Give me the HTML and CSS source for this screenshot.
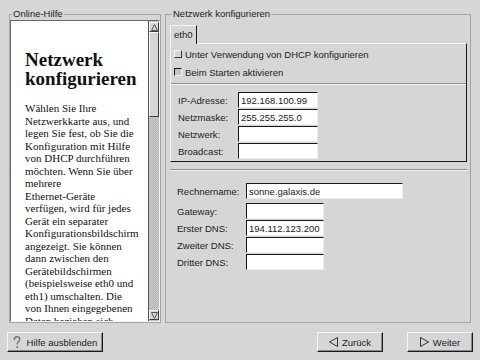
FILE: index.html
```html
<!DOCTYPE html>
<html lang="de">
<head>
<meta charset="UTF-8">
<meta name="viewport" content="width=device-width, initial-scale=1.0">
<title>Netzwerk konfigurieren</title>
<link rel="stylesheet" href="styles.css">
</head>
<body>
<div class="main">
  <fieldset class="frame help-frame">
    <legend>Online-Hilfe</legend>
    <div class="scrolled">
      <div class="help-text">
        <h1>Netzwerk<br>konfigurieren</h1>
        <p>Wählen Sie Ihre<br>
        Netzwerkkarte aus, und<br>
        legen Sie fest, ob Sie die<br>
        Konfiguration mit Hilfe<br>
        von DHCP durchführen<br>
        möchten. Wenn Sie über<br>
        mehrere<br>
        Ethernet-Geräte<br>
        verfügen, wird für jedes<br>
        Gerät ein separater<br>
        Konfigurationsbildschirm<br>
        angezeigt. Sie können<br>
        dann zwischen den<br>
        Gerätebildschirmen<br>
        (beispielsweise eth0 und<br>
        eth1) umschalten. Die<br>
        von Ihnen eingegebenen<br>
        Daten beziehen sich</p>
      </div>
      <div class="scrollbar">
        <div class="sb-btn">
          <svg width="7" height="7" viewBox="0 0 7 7"><polygon points="3.5,0.5 6.5,6.5 0.5,6.5" fill="none" stroke="#555"/></svg>
        </div>
        <div class="sb-thumb"></div>
        <div class="sb-trough"></div>
        <div class="sb-btn">
          <svg width="7" height="7" viewBox="0 0 7 7"><polygon points="0.5,0.5 6.5,0.5 3.5,6.5" fill="none" stroke="#555"/></svg>
        </div>
      </div>
    </div>
  </fieldset>

  <fieldset class="frame net-frame">
    <legend>Netzwerk konfigurieren</legend>
    <div class="tabs"><span class="tab">eth0</span></div>
    <div class="tab-page">
      <label class="check"><span class="box"></span>Unter Verwendung von DHCP konfigurieren</label>
      <label class="check"><span class="box on"></span>Beim Starten aktivieren</label>
      <div class="sep"></div>
      <div class="form-grid ip-grid">
        <span>IP-Adresse:</span><input type="text" value="192.168.100.99">
        <span>Netzmaske:</span><input type="text" value="255.255.255.0">
        <span>Netzwerk:</span><input type="text" value="">
        <span>Broadcast:</span><input type="text" value="">
      </div>
    </div>
    <div class="sep outer-sep"></div>
    <div class="form-grid host-row">
      <span>Rechnername:</span><input type="text" class="wide" value="sonne.galaxis.de">
    </div>
    <div class="form-grid dns-grid">
      <span>Gateway:</span><input type="text" value="">
      <span>Erster DNS:</span><input type="text" value="194.112.123.200">
      <span>Zweiter DNS:</span><input type="text" value="">
      <span>Dritter DNS:</span><input type="text" value="">
    </div>
  </fieldset>
</div>

<div class="buttons">
  <button class="btn help-btn">
    <svg width="8" height="13" viewBox="0 0 8 13"><path d="M1.3 4 C1.3 1.8 2.6 0.8 4 0.8 C5.6 0.8 6.7 2 6.7 3.5 C6.7 5.4 4.2 5.8 4.2 8.4" fill="none" stroke="#777" stroke-width="1.4"/><circle cx="4.2" cy="11" r="1" fill="#777"/></svg>
    Hilfe ausblenden
  </button>
  <button class="btn nav-btn back">
    <svg width="9" height="10" viewBox="0 0 9 10"><polygon points="8.5,0.5 8.5,9.5 0.5,5" fill="none" stroke="#333"/></svg>
    Zurück
  </button>
  <button class="btn nav-btn">
    <svg width="9" height="10" viewBox="0 0 9 10"><polygon points="0.5,0.5 0.5,9.5 8.5,5" fill="none" stroke="#333"/></svg>
    Weiter
  </button>
</div>
</body>
</html>
```

FILE: styles.css
```css
* {
  box-sizing: border-box;
}
body {
  margin: 0;
  width: 480px;
  height: 360px;
  overflow: hidden;
  background-color: #d6d6d6;
  font-family: 'Liberation Sans', Arial, sans-serif;
  font-size: 9.5px;
  color: #1c1c1c;
}
.main {
  display: flex;
  gap: 4px;
  height: 323px;
  padding: 9px 0 0 9px;
}
.frame {
  display: flex;
  flex-direction: column;
  margin: 0;
  padding: 0;
  min-width: 0;
  min-height: 0;
  border: 1px solid #a4a4a4;
}
.frame legend {
  margin-left: 2px;
  padding: 0 1px;
  line-height: 10px;
}
.help-frame {
  width: 152px;
  padding-top: 1px;
}
.net-frame {
  width: 306px;
  padding: 6px 3px 0 4px;
}

/* help pane */
.scrolled {
  flex: 1;
  min-height: 0;
  overflow: hidden;
  display: flex;
  border: 1px solid;
  border-color: #6a6a6a #f4f4f4 #f4f4f4 #6a6a6a;
}
.help-text {
  flex: 1;
  background-color: #fff;
  overflow: hidden;
  padding-left: 14px;
  font-family: 'Liberation Serif', 'Times New Roman', serif;
  color: #111;
}
.help-text h1 {
  margin: 29px 0 0;
  font-size: 19px;
  line-height: 19px;
}
.help-text p {
  margin: 14px 0 0;
  font-size: 11px;
  line-height: 12.5px;
  white-space: nowrap;
}
.scrollbar {
  width: 11px;
  display: flex;
  flex-direction: column;
  padding: 1px 0;
  border-left: 1px solid #555;
  background: repeating-conic-gradient(#b2b2b2 0 25%, #cfcfcf 0 50%) 0 0 / 2px 2px;
}
.sb-btn, .sb-thumb {
  border: 1px solid;
  border-color: #f4f4f4 #3c3c3c #3c3c3c #f4f4f4;
  background-color: #d6d6d6;
}
.sb-btn {
  height: 10px;
  display: flex;
  align-items: center;
  justify-content: center;
}
.sb-thumb {
  height: 85px;
}
.sb-trough {
  flex: 1;
}

/* notebook */
.tabs {
  height: 18px;
}
.tab {
  position: relative;
  display: inline-block;
  width: 27px;
  height: 19px;
  padding-left: 3px;
  line-height: 17px;
  background-color: #d6d6d6;
  border: 1px solid;
  border-bottom: none;
  border-color: #f4f4f4 #1a1a1a #f4f4f4 #f4f4f4;
}
.tab-page {
  height: 119px;
  padding: 1px 0 2px;
  border: 1px solid;
  border-color: #f4f4f4 #1a1a1a #1a1a1a #f4f4f4;
}
.check {
  display: flex;
  align-items: center;
  gap: 3px;
  height: 18px;
  padding-left: 3px;
}
.box {
  width: 8px;
  height: 8px;
  border: 1px solid;
  border-color: #f4f4f4 #3a3a3a #3a3a3a #f4f4f4;
  background-color: #d6d6d6;
}
.box.on {
  border-color: #1a1a1a #f4f4f4 #f4f4f4 #1a1a1a;
  background-color: #c4c4c4;
}
.sep {
  height: 2px;
  margin-top: 2px;
  border-top: 1px solid #8e8e8e;
  border-bottom: 1px solid #f4f4f4;
}
.outer-sep {
  margin-top: 7px;
}

/* label / entry grids */
.form-grid {
  display: grid;
  align-items: center;
  grid-auto-rows: 16px;
  row-gap: 1px;
}
.form-grid input {
  width: 80px;
  height: 16px;
  margin: 0;
  padding: 0 2px;
  font-family: 'Liberation Sans', Arial, sans-serif;
  font-size: 9.5px;
  color: #222;
  background-color: #fff;
  border: 1px solid;
  border-color: #1a1a1a #ececec #ececec #1a1a1a;
  outline: none;
}
.ip-grid {
  margin-top: 7px;
  padding-left: 7px;
  grid-template-columns: 60px 80px;
}
.host-row, .dns-grid {
  padding-left: 7px;
  grid-template-columns: 69px auto;
}
.host-row {
  margin-top: 12px;
}
.dns-grid {
  margin-top: 4px;
}
.dns-grid input {
  width: 78px;
}
.form-grid input.wide {
  width: 157px;
}

/* bottom buttons */
.buttons {
  display: flex;
  padding: 9px 7px 0;
}
.btn {
  display: flex;
  align-items: center;
  justify-content: center;
  gap: 4px;
  height: 20px;
  padding: 0;
  font-family: 'Liberation Sans', Arial, sans-serif;
  font-size: 9.5px;
  color: #1c1c1c;
  background-color: #d6d6d6;
  border: 1px solid;
  border-color: #f4f4f4 #1a1a1a #1a1a1a #f4f4f4;
  box-shadow: inset -1px -1px 0 #8a8a8a;
}
.help-btn {
  width: 96px;
  gap: 6px;
}
.nav-btn {
  width: 66px;
}
.back {
  margin-left: auto;
  margin-right: 24px;
}
```
